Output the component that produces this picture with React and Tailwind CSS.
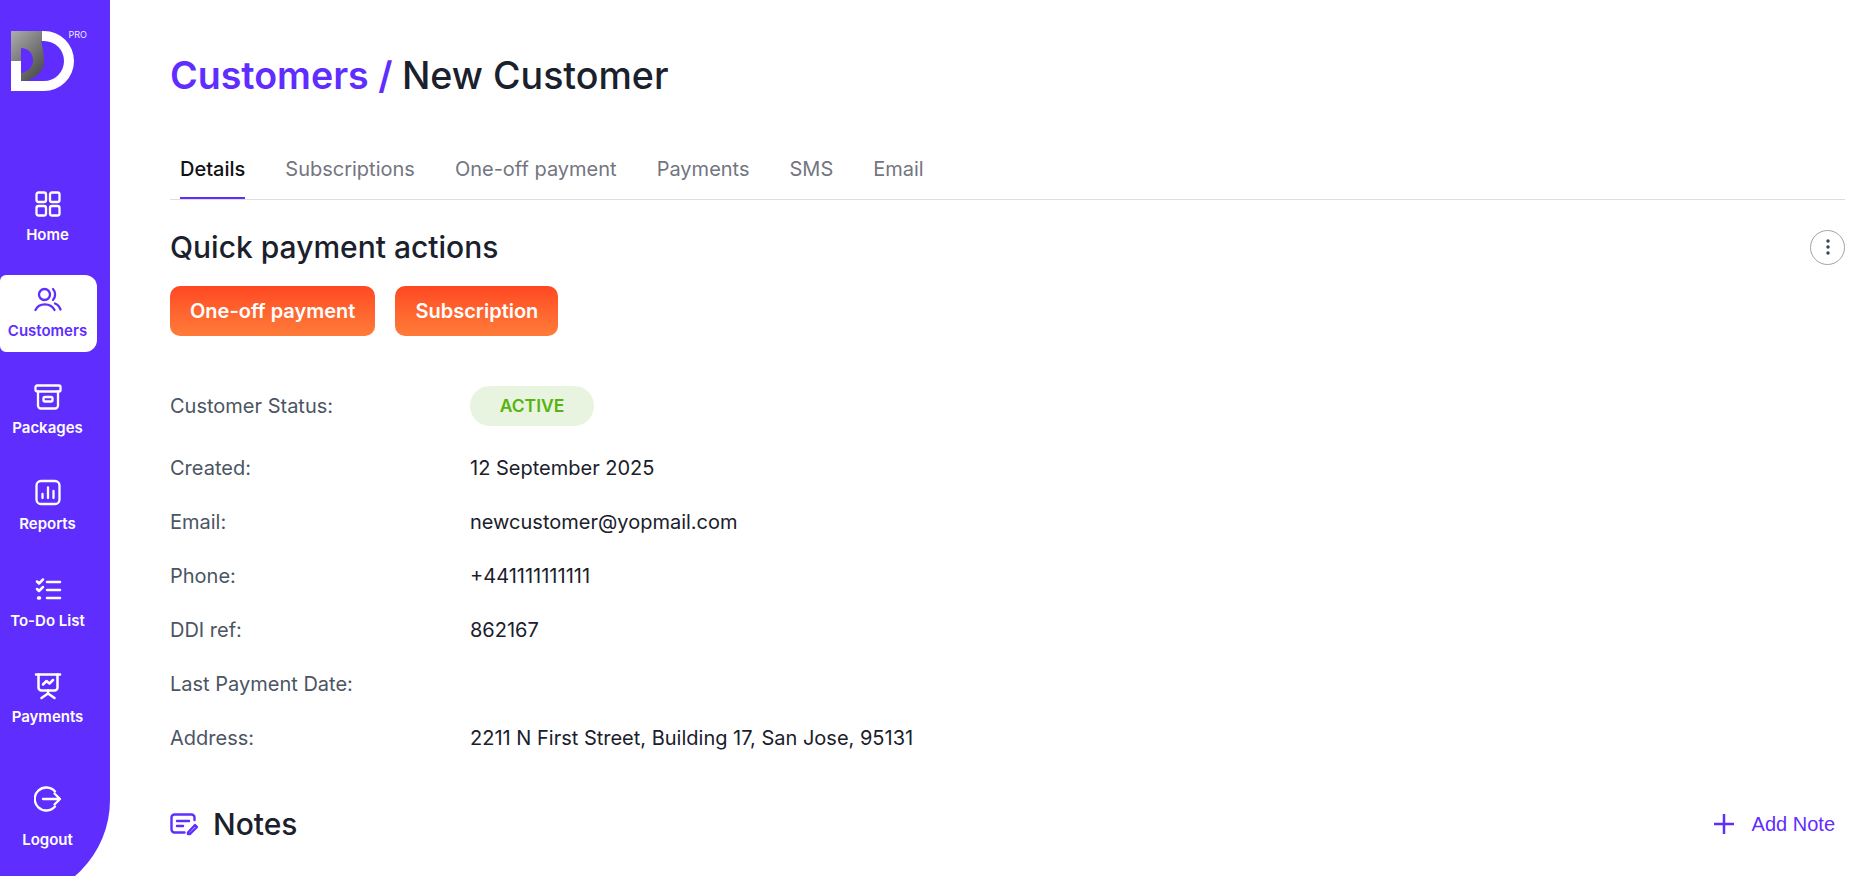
const tabs = ['Details', 'Subscriptions', 'One-off payment', 'Payments', 'SMS', 'Email'];

const rows = [
  ['Created:', '12 September 2025'],
  ['Email:', 'newcustomer@yopmail.com'],
  ['Phone:', '+441111111111'],
  ['DDI ref:', '862167'],
  ['Last Payment Date:', ''],
  ['Address:', '2211 N First Street, Building 17, San Jose, 95131'],
];

function Icon({ children }) {
  return (
    <svg viewBox="0 0 28 28" fill="none" stroke="currentColor" strokeWidth="2.300" strokeLinecap="round" strokeLinejoin="round" className="h-7 w-7">
      {children}
    </svg>
  );
}

const navItems = [
  {
    label: 'Home',
    icon: (
      <>
        <rect x="2.5" y="2.5" width="9.5" height="9.5" rx="2" />
        <rect x="16" y="2.5" width="9.5" height="9.5" rx="2" />
        <rect x="2.5" y="16" width="9.5" height="9.5" rx="2" />
        <rect x="16" y="16" width="9.5" height="9.5" rx="2" />
      </>
    ),
  },
  {
    label: 'Customers',
    active: true,
    icon: (
      <>
        <circle cx="10.500" cy="8.500" r="5.500" />
        <path d="M19 3c2.800 2.800 2.800 8.200 0 11" />
        <path d="M1.500 24c3.500-7.500 15-7.500 19 0" />
        <path d="M21 17.500c2.400.8 4.300 3 5.500 6" />
      </>
    ),
  },
  {
    label: 'Packages',
    icon: (
      <>
        <rect x="1.500" y="2.500" width="25" height="6" rx="1.500" />
        <path d="M4 8.500v14a3 3 0 0 0 3 3h14a3 3 0 0 0 3-3v-14" />
        <rect x="9.500" y="14" width="9" height="4.500" rx="1.500" />
      </>
    ),
  },
  {
    label: 'Reports',
    icon: (
      <>
        <rect x="2.500" y="2" width="23" height="23" rx="4.500" />
        <path d="M8.500 19v-4M14 19V8.500M19.500 19v-7" />
      </>
    ),
  },
  {
    label: 'To-Do List',
    icon: (
      <>
        <path d="M3 5.500l2 2 4-4M3 13l2 2 4-4" strokeWidth="2.500" />
        <path d="M13 6h13M13 14h13M13 22h13" strokeWidth="2.500" />
        <path d="M4.500 22h1" strokeWidth="3.500" />
      </>
    ),
  },
  {
    label: 'Payments',
    icon: (
      <>
        <path d="M2 2.500h24" strokeWidth="2.500" />
        <path d="M4.500 2.500v13a3 3 0 0 0 3 3h13a3 3 0 0 0 3-3v-13" strokeWidth="2.500" />
        <path d="M9 12.500l3.500-3.500 3 2.500 3.500-3.500" strokeWidth="2.500" />
        <path d="M14 18.500v3M7.500 26l6.500-4.500 6.500 4.500" strokeWidth="2.500" />
      </>
    ),
  },
];

function Logo() {
  return (
    <svg viewBox="0 0 90 100" className="block h-[100px] w-[90px]">
      <defs>
        <linearGradient id="logoGray" x1="0.1" y1="0" x2="0.8" y2="1">
          <stop offset="0" stopColor="#a8a8a8" />
          <stop offset="1" stopColor="#4a4a4a" />
        </linearGradient>
      </defs>
      <path d="M42 31H44A30 30 0 0 1 44 91H11V61H21V81H44A20 20 0 0 0 44 41H42Z" fill="#fff" />
      <path d="M11 31H42V41C40 41 44 48 44 61C44 72 34 81 21 81V61H11Z" fill="url(#logoGray)" />
      <path d="M21 48C28 48 33 53 33 60.500C33 67 28 72 21 73Z" fill="#5f2eff" />
      <text x="68.500" y="37.500" fill="#fff" fontSize="9" fontFamily="Inter, sans-serif" opacity="0.9">PRO</text>
    </svg>
  );
}

function Sidebar() {
  return (
    <aside className="flex h-[900px] w-[110px] shrink-0 flex-col rounded-br-[100px] bg-[#5f2eff] text-white">
      <div className="h-[178px] shrink-0">
        <Logo />
      </div>
      <nav className="flex w-[97px] flex-col gap-[19.500px]">
        {navItems.map((item) => (
          <div
            key={item.label}
            className={`flex h-[77px] flex-col items-center justify-center gap-[7px] rounded-r-xl rounded-l-md pt-[1px] pr-[2px] ${item.active ? 'bg-white text-[#5f2eff]' : ''}`}
          >
            <Icon>{item.icon}</Icon>
            <span className="text-[15px] leading-5 font-semibold">{item.label}</span>
          </div>
        ))}
      </nav>
      <div className="mt-[47px] flex w-[95px] flex-col items-center gap-[17px]">
        <Icon>
          <path d="M21 6.500A11.500 11.500 0 1 0 21 21.500" />
          <path d="M9 14h17M20.500 8.500L26 14l-5.500 5.500" />
        </Icon>
        <span className="text-[15px] leading-5 font-semibold">Logout</span>
      </div>
    </aside>
  );
}

export default function App() {
  return (
    <div className="flex h-[876px] overflow-hidden bg-white font-['Inter',sans-serif] text-[#1a202c]">
      <Sidebar />
      <main className="min-w-0 flex-1 pt-[51px] pr-2 pl-[60px]">
        <h1 className="text-[37.600px] leading-[50px] font-medium">
          <span className="font-semibold text-[#5f2eff]">Customers / </span>New Customer
        </h1>

        <div className="mt-[47px] flex gap-10 border-b border-[#dedee2] px-[10px]">
          {tabs.map((tab, i) => (
            <div
              key={tab}
              className={`h-[51px] pt-[1px] text-xl leading-[40px] ${i === 0 ? 'border-b-2 border-[#5f2eff] font-medium text-[#111]' : 'text-[#73757f]'}`}
            >
              {tab}
            </div>
          ))}
        </div>

        <div className="mt-[29px] flex items-center justify-between">
          <h2 className="text-[30px] leading-9 font-medium">Quick payment actions</h2>
          <button className="flex h-[35px] w-[35px] items-center justify-center rounded-full border border-[#a3a3a8]">
            <svg viewBox="0 0 16 16" className="h-4 w-4 fill-[#374151]">
              <circle cx="8" cy="2" r="1.700" />
              <circle cx="8" cy="8" r="1.700" />
              <circle cx="8" cy="14" r="1.700" />
            </svg>
          </button>
        </div>

        <div className="mt-[21px] flex gap-5">
          <button className="h-[50px] rounded-[10px] bg-gradient-to-b from-[#ff4722] to-[#ff7b39] px-5 text-xl font-semibold text-white">
            One-off payment
          </button>
          <button className="h-[50px] rounded-[10px] bg-gradient-to-b from-[#ff4722] to-[#ff7b39] px-5 text-xl font-semibold text-white">
            Subscription
          </button>
        </div>

        <div className="mt-[50px] flex h-10 items-center text-xl text-[#4b5563]">
          <span className="w-[300px]">Customer Status:</span>
          <span className="flex h-10 w-[124px] items-center justify-center rounded-full bg-[#e9f4e0] text-[17.500px] font-semibold text-[#57b30d]">
            ACTIVE
          </span>
        </div>

        <div className="mt-[29px] flex flex-col gap-7">
          {rows.map(([label, value]) => (
            <div key={label} className="flex h-[26px] items-center text-xl">
              <span className="w-[300px] text-[#4b5563]">{label}</span>
              <span>{value}</span>
            </div>
          ))}
        </div>

        <div className="mt-[55px] flex items-center justify-between">
          <div className="flex items-center gap-[15px]">
            <svg viewBox="0 0 28 24" fill="none" stroke="#5f2eff" strokeWidth="2.400" strokeLinecap="round" strokeLinejoin="round" className="h-6 w-7">
              <path d="M24.500 8V5.500a3 3 0 0 0-3-3H4.500a3 3 0 0 0-3 3v12a3 3 0 0 0 3 3h10" />
              <path d="M7 9h12M7 14h6" />
              <path d="M18 20.500l7-7.500 2 2-7 7h-2Z" />
            </svg>
            <h2 className="text-[30px] leading-9 font-medium">Notes</h2>
          </div>
          <div className="flex items-center gap-4 pr-[10px] font-['Liberation_Sans',sans-serif] text-xl text-[#5f2eff]">
            <svg viewBox="0 0 24 24" fill="none" stroke="currentColor" strokeWidth="2.500" className="h-6 w-6">
              <path d="M12 2v20M2 12h20" />
            </svg>
            Add Note
          </div>
        </div>
      </main>
    </div>
  );
}
